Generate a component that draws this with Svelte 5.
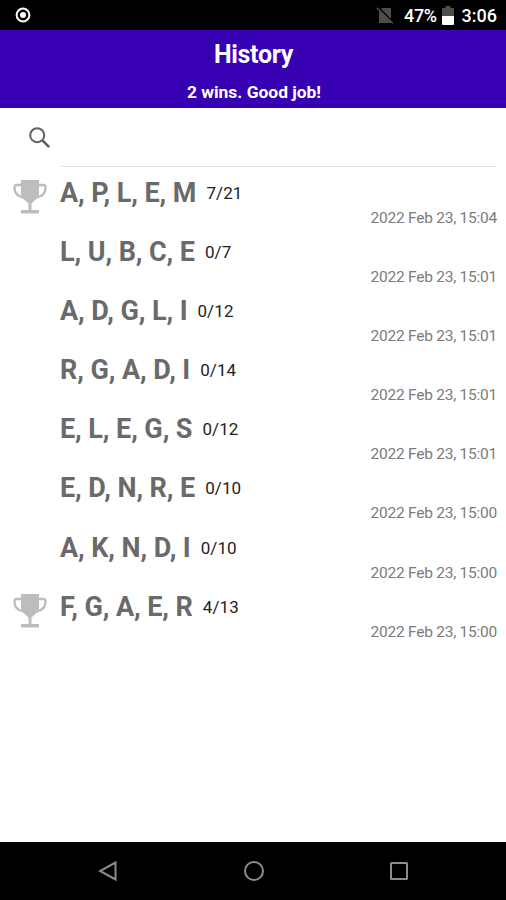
<script lang="ts">
    interface Game {
        letters: string[];
        found: number;
        total: number;
        date: string;
    }

    const games: Game[] = [
        { letters: ['A', 'P', 'L', 'E', 'M'], found: 7, total: 21, date: '2022 Feb 23, 15:04' },
        { letters: ['L', 'U', 'B', 'C', 'E'], found: 0, total: 7, date: '2022 Feb 23, 15:01' },
        { letters: ['A', 'D', 'G', 'L', 'I'], found: 0, total: 12, date: '2022 Feb 23, 15:01' },
        { letters: ['R', 'G', 'A', 'D', 'I'], found: 0, total: 14, date: '2022 Feb 23, 15:01' },
        { letters: ['E', 'L', 'E', 'G', 'S'], found: 0, total: 12, date: '2022 Feb 23, 15:01' },
        { letters: ['E', 'D', 'N', 'R', 'E'], found: 0, total: 10, date: '2022 Feb 23, 15:00' },
        { letters: ['A', 'K', 'N', 'D', 'I'], found: 0, total: 10, date: '2022 Feb 23, 15:00' },
        { letters: ['F', 'G', 'A', 'E', 'R'], found: 4, total: 13, date: '2022 Feb 23, 15:00' },
    ];

    let wins = $derived(games.filter((game) => game.found > 0).length);
</script>

<div class="screen">
    <div class="status">
        <svg class="record" width="16" height="16" viewBox="0 0 16 16">
            <circle cx="8" cy="8" r="6.4" fill="none" stroke="#fff" stroke-width="2" />
            <circle cx="8" cy="8" r="3" fill="#fff" />
        </svg>
        <svg class="no-sim" width="18" height="18" viewBox="0 0 18 18">
            <path d="M6 2h9v15H3V5z" fill="#4d4d4d" />
            <path d="M2 1.200l15.500 15.800" stroke="#000" stroke-width="2" />
            <path d="M.8 1.800l16 15.600" stroke="#4d4d4d" stroke-width="1.5" />
        </svg>
        <span class="percent">47%</span>
        <svg class="battery" width="12" height="20" viewBox="0 0 12 20">
            <path d="M3.5 1h5v2H11q1 0 1 1v7H0V4q0-1 1-1h2.5z" fill="#4d4d4d" />
            <path d="M0 11h12v8q0 1-1 1H1q-1 0-1-1z" fill="#fff" />
        </svg>
        <span class="clock">3:06</span>
    </div>

    <header>
        <h1>History</h1>
        <p>{wins} wins. Good job!</p>
    </header>

    <div class="search">
        <svg width="22" height="22" viewBox="0 0 22 22" fill="none" stroke="#606060">
            <circle cx="8.2" cy="8.2" r="7" stroke-width="2" />
            <path d="M13.2 13.2l7 7" stroke-width="2.6" />
        </svg>
        <div class="field"></div>
    </div>

    <ul>
        {#each games as game}
            <li>
                <div class="trophy">
                    {#if game.found > 0}
                        <svg width="34" height="34" viewBox="0 0 34 34">
                            <path
                                d="M8 5H3.5Q1.5 5 1.5 7.5Q1.5 16 10.5 17.5M26 5h4.5Q32.5 5 32.5 7.5Q32.5 16 23.5 17.5"
                                fill="none"
                                stroke="#bdbdbd"
                                stroke-width="2.4"
                            />
                            <path d="M8 0h18v14q0 3-2 4.5l-5.500 5V30H26v3.5H8V30h7.5v-6.500l-5.500-5q-2-1.500-2-4.500z" fill="#bdbdbd" />
                        </svg>
                    {/if}
                </div>
                <span class="letters">{game.letters.join(', ')}</span>
                <span class="score">{game.found}/{game.total}</span>
                <time>{game.date}</time>
            </li>
        {/each}
    </ul>

    <nav>
        <svg width="20" height="22" viewBox="0 0 20 22">
            <path d="M17.5 2.5v17L2 11z" />
        </svg>
        <svg width="22" height="22" viewBox="0 0 22 22">
            <circle cx="11" cy="11" r="9" />
        </svg>
        <svg width="20" height="20" viewBox="0 0 20 20">
            <rect x="2" y="2" width="16" height="16" rx="0.5" />
        </svg>
    </nav>
</div>

<style>
    :global(body) {
        background: #fff;
    }

    .screen {
        box-sizing: border-box;
        width: 506px;
        height: 900px;
        display: flex;
        flex-direction: column;
        overflow: hidden;
        background: #fff;
        font-family: Roboto, sans-serif;
    }

    .status {
        height: 30px;
        flex: none;
        display: flex;
        align-items: center;
        padding: 0 9px 0 15px;
        box-sizing: border-box;
        background: #000;
        color: #fff;
        font-size: 18px;
        font-weight: 500;
    }

    .status span {
        line-height: 30px;
        padding-top: 2px;
    }

    .no-sim {
        margin-left: auto;
    }

    .percent {
        margin-left: 10px;
        letter-spacing: -0.4px;
    }

    .battery {
        margin: 0 8px 0 5px;
    }

    header {
        height: 78px;
        flex: none;
        background: #3700b3;
        color: #fff;
        text-align: center;
    }

    h1 {
        margin: 0;
        padding: 9px 0 0 1px;
        font-size: 25px;
        font-weight: 700;
        line-height: 32px;
        letter-spacing: -0.3px;
    }

    p {
        margin: 0;
        padding: 10px 0 0 2px;
        font-size: 17.4px;
        font-weight: 700;
        line-height: 22px;
    }

    .search {
        height: 59px;
        flex: none;
        display: flex;
        padding: 0 10px 0 29px;
    }

    .search svg {
        margin-top: 19px;
    }

    .field {
        flex: 1;
        margin-left: 9px;
        border-bottom: 1px solid #e4e4e4;
    }

    ul {
        flex: 1;
        margin: 0;
        padding: 7px 9px 0 13px;
        list-style: none;
    }

    li {
        height: 59.1px;
        display: grid;
        grid-template-columns: 47px auto 1fr;
        grid-template-rows: 38px 21px;
        align-items: center;
    }

    .trophy {
        height: 34px;
        align-self: start;
        margin-top: 6px;
    }

    .trophy svg {
        display: block;
    }

    .letters {
        color: #6a6a6a;
        font-size: 27px;
        font-weight: 700;
        line-height: 38px;
        letter-spacing: -0.08px;
    }

    .score {
        margin-left: 10px;
        color: #222;
        font-size: 17px;
        line-height: 38px;
        letter-spacing: 0.1px;
    }

    time {
        grid-column: 1 / -1;
        align-self: start;
        justify-self: end;
        color: #7b7b7b;
        font-size: 15.5px;
        line-height: 21px;
        letter-spacing: -0.24px;
        margin-top: -4px;
    }

    nav {
        height: 58px;
        flex: none;
        display: flex;
        align-items: center;
        justify-content: space-between;
        box-sizing: border-box;
        padding: 0 97px 0 98px;
        background: #000;
    }

    nav path,
    nav circle,
    nav rect {
        fill: none;
        stroke: #8c8c8c;
        stroke-width: 2;
    }
</style>
